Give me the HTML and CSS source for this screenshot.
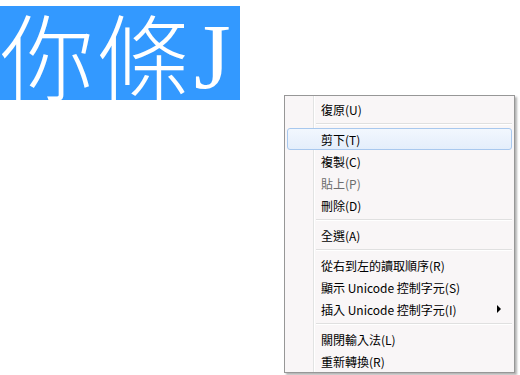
FILE: index.html
```html
<!DOCTYPE html>
<html lang="zh-Hant">
<head>
    <meta charset="UTF-8">
    <title>右鍵選單</title>
    <link rel="stylesheet" href="styles.css">
</head>
<body>
    <div class="editor">
        <div class="selected"><span>你條</span><span class="latin">J</span></div>
    </div>

    <div class="menu">
        <div class="item">復原(U)</div>
        <div class="sep"></div>
        <div class="item hover">剪下(T)</div>
        <div class="item">複製(C)</div>
        <div class="item disabled">貼上(P)</div>
        <div class="item">刪除(D)</div>
        <div class="sep"></div>
        <div class="item">全選(A)</div>
        <div class="sep"></div>
        <div class="item">從右到左的讀取順序(R)</div>
        <div class="item">顯示 Unicode 控制字元(S)</div>
        <div class="item">插入 Unicode 控制字元(I)<span class="arrow"></span></div>
        <div class="sep"></div>
        <div class="item">關閉輸入法(L)</div>
        <div class="item">重新轉換(R)</div>
    </div>
</body>
</html>
```

FILE: styles.css
```css
body {
    margin: 0;
    background: #fff;
    font-family: "Noto Sans CJK TC", sans-serif;
}
.editor {
    padding-top: 6px;
}
.selected {
    display: flex;
    align-items: center;
    width: 240px;
    height: 94px;
    background: #3399ff;
    color: #fff;
    font-family: "Noto Sans CJK TC", serif;
    font-size: 94px;
    font-weight: 300;
    line-height: 94px;
    letter-spacing: 2px;
    white-space: nowrap;
}
.latin {
    font-family: "Liberation Serif", serif;
    font-weight: normal;
    margin-left: 2px;
    margin-top: 6px;
}
.menu {
    position: absolute;
    left: 284px;
    top: 95px;
    width: 227px;
    padding: 2px 1px 0 1px;
    border: 1px solid #979797;
    background:
        linear-gradient(to right, transparent 28px, #e2e3e3 28px, #e2e3e3 29px, #fff 29px, #fff 30px, transparent 30px),
        #f9f6f7;
    box-shadow: 2px 2px 2px rgba(0, 0, 0, 0.3);
}
.item {
    display: flex;
    align-items: center;
    height: 20px;
    margin: 0 1px;
    padding-left: 33px;
    padding-right: 10px;
    border: 1px solid transparent;
    border-radius: 3px;
    font-size: 12px;
    color: #000;
}
.item.hover {
    border-color: #a8c8ee;
    background: linear-gradient(#f2f7fe, #e4eefb);
}
.item.disabled {
    color: #6d6d6d;
}
.arrow {
    margin-left: auto;
    width: 0;
    height: 0;
    border-top: 4px solid transparent;
    border-bottom: 4px solid transparent;
    border-left: 4px solid #000;
}
.sep {
    height: 8px;
    margin-left: 30px;
    margin-right: 1px;
    background: linear-gradient(transparent 3px, #e0e0e0 3px, #e0e0e0 4px, #fff 4px, #fff 5px, transparent 5px);
}
```
